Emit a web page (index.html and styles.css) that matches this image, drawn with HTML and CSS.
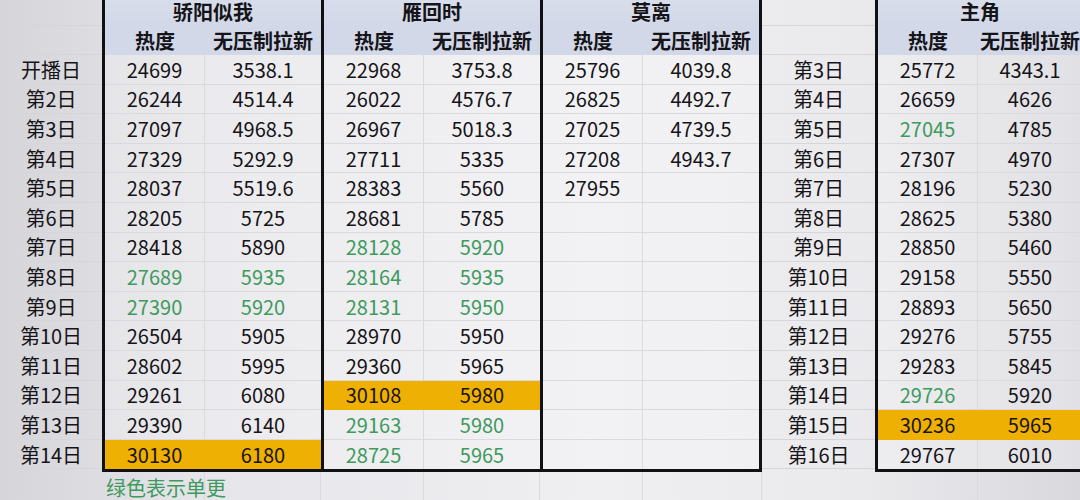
FILE: index.html
```html
<!DOCTYPE html>
<html lang="zh">
<head>
<meta charset="utf-8">
<link rel="stylesheet" href="styles.css">
</head>
<body>
<div class="sheet">
  <div class="group labels">
    <div class="lc top"></div>
    <div class="lc head"></div>
    <div class="lc">开播日</div>
    <div class="lc">第2日</div>
    <div class="lc">第3日</div>
    <div class="lc">第4日</div>
    <div class="lc">第5日</div>
    <div class="lc">第6日</div>
    <div class="lc">第7日</div>
    <div class="lc">第8日</div>
    <div class="lc">第9日</div>
    <div class="lc">第10日</div>
    <div class="lc">第11日</div>
    <div class="lc">第12日</div>
    <div class="lc">第13日</div>
    <div class="lc">第14日</div>
    <div class="lc foot"></div>
  </div>

  <div class="group">
    <div class="block">
      <div class="title">骄阳似我</div>
      <div class="sub">热度</div><div class="sub">无压制拉新</div>
      <div class="c">24699</div><div class="c">3538.1</div>
      <div class="c">26244</div><div class="c">4514.4</div>
      <div class="c">27097</div><div class="c">4968.5</div>
      <div class="c">27329</div><div class="c">5292.9</div>
      <div class="c">28037</div><div class="c">5519.6</div>
      <div class="c">28205</div><div class="c">5725</div>
      <div class="c">28418</div><div class="c">5890</div>
      <div class="c g">27689</div><div class="c g">5935</div>
      <div class="c g">27390</div><div class="c g">5920</div>
      <div class="c">26504</div><div class="c">5905</div>
      <div class="c">28602</div><div class="c">5995</div>
      <div class="c">29261</div><div class="c">6080</div>
      <div class="c">29390</div><div class="c">6140</div>
      <div class="c hl">30130</div><div class="c hl">6180</div>
    </div>
    <div class="after">
      <div class="ac note">绿色表示单更</div><div class="ac"></div>
    </div>
  </div>

  <div class="group">
    <div class="block">
      <div class="title">雁回时</div>
      <div class="sub">热度</div><div class="sub">无压制拉新</div>
      <div class="c">22968</div><div class="c">3753.8</div>
      <div class="c">26022</div><div class="c">4576.7</div>
      <div class="c">26967</div><div class="c">5018.3</div>
      <div class="c">27711</div><div class="c">5335</div>
      <div class="c">28383</div><div class="c">5560</div>
      <div class="c">28681</div><div class="c">5785</div>
      <div class="c g">28128</div><div class="c g">5920</div>
      <div class="c g">28164</div><div class="c g">5935</div>
      <div class="c g">28131</div><div class="c g">5950</div>
      <div class="c">28970</div><div class="c">5950</div>
      <div class="c">29360</div><div class="c">5965</div>
      <div class="c hl">30108</div><div class="c hl">5980</div>
      <div class="c g">29163</div><div class="c g">5980</div>
      <div class="c g">28725</div><div class="c g">5965</div>
    </div>
    <div class="after">
      <div class="ac"></div><div class="ac"></div>
    </div>
  </div>

  <div class="group">
    <div class="block last">
      <div class="title">莫离</div>
      <div class="sub">热度</div><div class="sub">无压制拉新</div>
      <div class="c">25796</div><div class="c">4039.8</div>
      <div class="c">26825</div><div class="c">4492.7</div>
      <div class="c">27025</div><div class="c">4739.5</div>
      <div class="c">27208</div><div class="c">4943.7</div>
      <div class="c">27955</div><div class="c"></div>
      <div class="c"></div><div class="c"></div>
      <div class="c"></div><div class="c"></div>
      <div class="c"></div><div class="c"></div>
      <div class="c"></div><div class="c"></div>
      <div class="c"></div><div class="c"></div>
      <div class="c"></div><div class="c"></div>
      <div class="c"></div><div class="c"></div>
      <div class="c"></div><div class="c"></div>
      <div class="c"></div><div class="c"></div>
    </div>
    <div class="after last">
      <div class="ac"></div><div class="ac"></div>
    </div>
  </div>

  <div class="group labels labels2">
    <div class="lc top"></div>
    <div class="lc head"></div>
    <div class="lc">第3日</div>
    <div class="lc">第4日</div>
    <div class="lc">第5日</div>
    <div class="lc">第6日</div>
    <div class="lc">第7日</div>
    <div class="lc">第8日</div>
    <div class="lc">第9日</div>
    <div class="lc">第10日</div>
    <div class="lc">第11日</div>
    <div class="lc">第12日</div>
    <div class="lc">第13日</div>
    <div class="lc">第14日</div>
    <div class="lc">第15日</div>
    <div class="lc">第16日</div>
    <div class="lc foot"></div>
  </div>

  <div class="group">
    <div class="block last narrow">
      <div class="title">主角</div>
      <div class="sub">热度</div><div class="sub">无压制拉新</div>
      <div class="c">25772</div><div class="c">4343.1</div>
      <div class="c">26659</div><div class="c">4626</div>
      <div class="c g">27045</div><div class="c">4785</div>
      <div class="c">27307</div><div class="c">4970</div>
      <div class="c">28196</div><div class="c">5230</div>
      <div class="c">28625</div><div class="c">5380</div>
      <div class="c">28850</div><div class="c">5460</div>
      <div class="c">29158</div><div class="c">5550</div>
      <div class="c">28893</div><div class="c">5650</div>
      <div class="c">29276</div><div class="c">5755</div>
      <div class="c">29283</div><div class="c">5845</div>
      <div class="c g">29726</div><div class="c">5920</div>
      <div class="c hl">30236</div><div class="c hl">5965</div>
      <div class="c">29767</div><div class="c">6010</div>
    </div>
    <div class="after narrow">
      <div class="ac"></div><div class="ac"></div>
    </div>
  </div>
</div>
</body>
</html>
```

FILE: styles.css
```css
* {
  box-sizing: border-box;
}

html, body {
  margin: 0;
  padding: 0;
  width: 1080px;
  height: 500px;
  overflow: hidden;
}

body {
  background: linear-gradient(to right, #d6d5da 0%, #e6e5e9 20%, #efeef1 55%, #eae9ec 80%, #d9d8dd 100%);
  font-family: "Noto Sans CJK JP", "Noto Sans CJK SC", sans-serif;
  font-size: 20px;
  color: #151418;
}

.sheet {
  display: flex;
  width: 1100px;
}

.group {
  display: flex;
  flex-direction: column;
  flex: none;
}

.labels {
  width: 102px;
}

.labels2 {
  width: 113px;
}

.lc {
  height: 29.6px;
  display: flex;
  align-items: center;
  justify-content: center;
  border-bottom: 1px solid #d6d5da;
  white-space: nowrap;
}

.lc.top {
  height: 25.5px;
}

.lc.head {
  height: 29.5px;
}

.lc.foot {
  height: 32.6px;
  border-bottom: none;
}

.block {
  display: grid;
  grid-template-columns: 100px 116px;
  border-left: 3px solid #111114;
  border-bottom: 3px solid #111114;
  background: rgba(255, 255, 255, 0.22);
}

.block.last {
  border-right: 3px solid #111114;
}

.block.narrow {
  grid-template-columns: 100px 104px;
}

.title {
  grid-column: span 2;
  height: 25.5px;
  display: flex;
  align-items: center;
  justify-content: center;
  font-family: "Liberation Sans", "Noto Sans CJK JP", "Noto Sans CJK SC", sans-serif;
  font-weight: bold;
  background: linear-gradient(#d8ddeb, #d2d8e7);
  line-height: 1;
}

.sub {
  height: 29.5px;
  display: flex;
  align-items: center;
  justify-content: center;
  font-weight: bold;
  background: #d2d8e7;
  white-space: nowrap;
}

.c {
  height: 29.6px;
  display: flex;
  align-items: center;
  justify-content: center;
  border-bottom: 1px solid #dad9de;
}

.block > .c:nth-child(even) {
  border-right: 1px solid #dad9de;
}

.block > .c:nth-last-child(-n+2) {
  border-bottom: none;
}

.c.g {
  color: #3e9a5e;
}

.block > .c.hl {
  background: #eeb002;
  border-color: #eeb002;
  color: #1a1406;
}

.after {
  display: grid;
  grid-template-columns: 103px 116px;
}

.after.last {
  grid-template-columns: 103px 119px;
}

.after.narrow {
  grid-template-columns: 103px 104px;
}

.ac {
  height: 29.6px;
  border-right: 1px solid #dad9de;
  display: flex;
  align-items: center;
  white-space: nowrap;
}

.note {
  color: #3e9a5e;
  padding-left: 4px;
  overflow: visible;
  position: relative;
  z-index: 1;
}
```
